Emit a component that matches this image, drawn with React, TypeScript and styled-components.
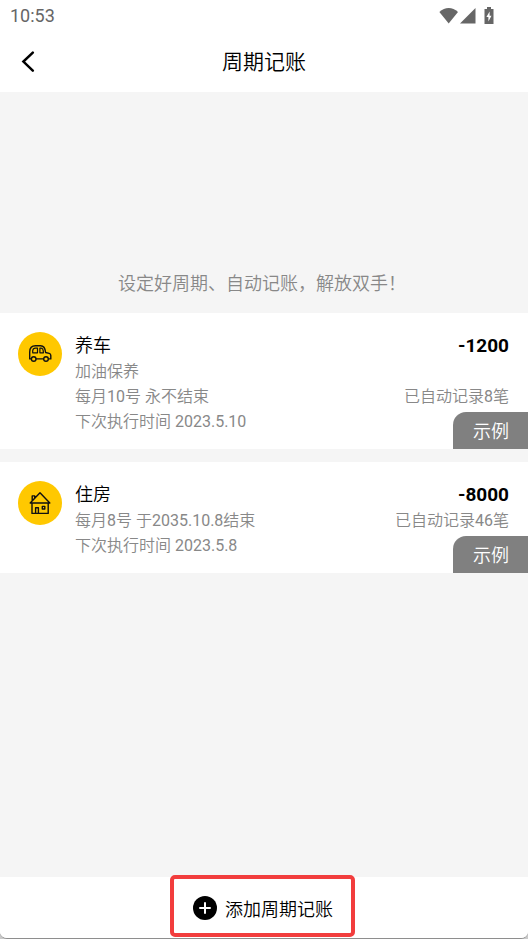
import React from "react";
import styled, { createGlobalStyle } from "styled-components";

const GlobalStyle = createGlobalStyle`
  * { box-sizing: border-box; }
  body {
    margin: 0;
    background: #c9c9c9;
    color: #000;
    font-family: Roboto, "Noto Sans CJK SC DemiLight", "Noto Sans CJK SC", sans-serif;
    font-size: 16px;
    font-weight: 400;
  }
  button { font: inherit; color: inherit; background: none; border: 0; padding: 0; cursor: pointer; }
  h1, h2, p { margin: 0; font-weight: inherit; }
`;

const Screen = styled.div`
  display: flex;
  flex-direction: column;
  min-height: 100vh;
  background: #f5f5f5;
  border-bottom: 1px solid #8e8e8e;
  border-radius: 0 0 7px 7px;
  overflow: hidden;
`;

const StatusBar = styled.div`
  display: flex;
  justify-content: space-between;
  align-items: center;
  height: 31px;
  padding: 0 32px 0 10px;
  background: #fff;
  color: #666;
  font-size: 18px;
`;

const StatusIcons = styled.div`
  display: flex;
  align-items: center;
`;

const NavBar = styled.header`
  display: grid;
  grid-template-columns: 56px 1fr 56px;
  align-items: center;
  height: 61px;
  background: #fff;
`;

const BackButton = styled.button`
  display: flex;
  align-items: center;
  height: 100%;
  padding-left: 21px;
`;

const PageTitle = styled.h1`
  text-align: center;
  font-size: 21px;
  line-height: 30px;
`;

const Content = styled.main`
  flex: 1;
`;

const Hint = styled.p`
  padding: 177px 18px 14px 14px;
  color: #888;
  font-size: 18px;
  line-height: 30px;
  text-align: center;
`;

const RecordList = styled.div`
  display: flex;
  flex-direction: column;
  gap: 13px;
`;

const Record = styled.article`
  position: relative;
  display: flex;
  gap: 13px;
  padding: 19px 19px 15px 18px;
  background: #fff;
`;

const CategoryIcon = styled.div`
  display: flex;
  align-items: center;
  justify-content: center;
  flex: none;
  width: 44px;
  height: 44px;
  border-radius: 50%;
  background: #ffc800;
`;

const Details = styled.div`
  flex: 1;
`;

const HeadLine = styled.div`
  display: flex;
  justify-content: space-between;
  font-size: 18px;
  line-height: 27px;
`;

const RecordTitle = styled.h2`
  font-size: 18px;
`;

const Amount = styled.strong`
  font-size: 19px;
  font-weight: 700;
`;

const InfoLine = styled.div`
  display: flex;
  justify-content: space-between;
  color: #888;
  line-height: 25px;
`;

const SampleTag = styled.span`
  position: absolute;
  right: 0;
  bottom: 0;
  padding: 2px 19px 0 20px;
  border-top-left-radius: 13px;
  background: #808080;
  color: #fff;
  font-size: 18px;
  line-height: 35px;
`;

const Footer = styled.footer`
  display: flex;
  justify-content: center;
  height: 61px;
  padding-right: 3px;
  background: #fff;
`;

const AddButton = styled.button`
  position: relative;
  display: flex;
  align-items: center;
  gap: 8px;
  padding: 0 22px 0 23px;
  font-size: 18px;

  &::after {
    content: "";
    position: absolute;
    inset: -2px 0 1px;
    border: 4px solid #f23d3d;
    border-radius: 5px;
  }
`;

const WifiIcon = () => (
  <svg width="21" height="16" viewBox="0 0 21 16" aria-hidden="true">
    <path d="M.4 4C6-1.2 13.4-1.2 19 4L9.7 15.6Z" fill="#666" />
  </svg>
);

const SignalIcon = () => (
  <svg width="16" height="16" viewBox="0 0 16 16" aria-hidden="true">
    <path d="M15.5 0V15.5H0Z" fill="#666" />
  </svg>
);

const BatteryIcon = () => (
  <svg width="20" height="17" viewBox="0 0 20 17" aria-hidden="true">
    <path d="M11 0h4v2h2.5v15h-9V2H11Z" fill="#666" />
    <path d="M13.6 4.5v4.2h1.9l-3.1 5.8v-4.4h-2Z" fill="#fff" />
  </svg>
);

const BackIcon = () => (
  <svg width="14" height="22" viewBox="0 0 14 22" fill="none" stroke="#000" strokeWidth="2.5" strokeLinecap="round" aria-hidden="true">
    <path d="M11.8 1.6 2.4 10.6l9.4 9" />
  </svg>
);

const CarIcon = () => (
  <svg width="24" height="20" viewBox="0 0 24 20" fill="none" stroke="#111" strokeWidth="1.4" strokeLinejoin="round" aria-hidden="true">
    <path d="M3.4 14.9H1.7V8C1.7 3.8 4 1.8 7.6 1.8h5c3.2 0 4.6 2.4 5 6.7l3.6.9c1.1.3 1.6.9 1.6 2v3.5h-2.3M8 14.9h7.7" />
    <path d="M4.7 8.8V6.6C4.9 5 6 4.1 7.4 4.1h2.1v4.7ZM11.9 4.1h1.3c1.3.2 1.9 1.1 2 2.5l.2 2.2h-3.5Z" strokeWidth="1.2" />
    <circle cx="5.7" cy="15" r="2.3" fill="#ffc800" />
    <circle cx="18" cy="15" r="2.3" fill="#ffc800" />
  </svg>
);

const HouseIcon = () => (
  <svg width="22" height="24" viewBox="0 0 22 24" fill="none" stroke="#111" strokeWidth="1.4" strokeLinejoin="round" strokeLinecap="round" aria-hidden="true">
    <path d="M1.2 12 11 1.7 20.8 12ZM3 12.2v10.2h16.2V12.2M3.2 9.7V4.9h2.5v2" />
    <path d="M6.6 22.2v-5.4h2.8v5.4M13.3 15.4h2.5V18h-2.5Z" />
  </svg>
);

const PlusIcon = () => (
  <svg width="24" height="24" viewBox="0 0 24 24" aria-hidden="true">
    <circle cx="12" cy="12" r="12" fill="#000" />
    <path d="M12 7v10M7 12h10" stroke="#fff" strokeWidth="2" strokeLinecap="round" />
  </svg>
);

interface RecordData {
  title: string;
  amount: string;
  note?: string;
  cycle: string;
  count: string;
  next: string;
  icon: React.ReactNode;
}

const records: RecordData[] = [
  {
    title: "养车",
    amount: "-1200",
    note: "加油保养",
    cycle: "每月10号 永不结束",
    count: "已自动记录8笔",
    next: "下次执行时间 2023.5.10",
    icon: <CarIcon />,
  },
  {
    title: "住房",
    amount: "-8000",
    cycle: "每月8号 于2035.10.8结束",
    count: "已自动记录46笔",
    next: "下次执行时间 2023.5.8",
    icon: <HouseIcon />,
  },
];

export default function App() {
  return (
    <>
      <GlobalStyle />
      <Screen lang="zh-CN">
        <StatusBar>
          <span>10:53</span>
          <StatusIcons>
            <WifiIcon />
            <SignalIcon />
            <BatteryIcon />
          </StatusIcons>
        </StatusBar>
        <NavBar>
          <BackButton type="button" aria-label="返回">
            <BackIcon />
          </BackButton>
          <PageTitle>周期记账</PageTitle>
        </NavBar>
        <Content>
          <Hint>设定好周期、自动记账，解放双手！</Hint>
          <RecordList>
            {records.map((r) => (
              <Record key={r.title}>
                <CategoryIcon>{r.icon}</CategoryIcon>
                <Details>
                  <HeadLine>
                    <RecordTitle>{r.title}</RecordTitle>
                    <Amount>{r.amount}</Amount>
                  </HeadLine>
                  {r.note && <InfoLine>{r.note}</InfoLine>}
                  <InfoLine>
                    <span>{r.cycle}</span>
                    <span>{r.count}</span>
                  </InfoLine>
                  <InfoLine>{r.next}</InfoLine>
                </Details>
                <SampleTag>示例</SampleTag>
              </Record>
            ))}
          </RecordList>
        </Content>
        <Footer>
          <AddButton type="button">
            <PlusIcon />
            添加周期记账
          </AddButton>
        </Footer>
      </Screen>
    </>
  );
}
